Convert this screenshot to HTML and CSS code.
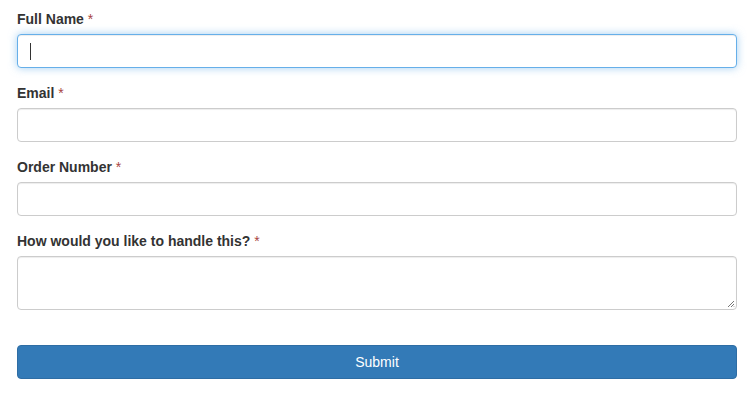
FILE: index.html
```html
<!DOCTYPE html>
<html>
<head>
<meta charset="utf-8">
<link rel="stylesheet" href="styles.css">
</head>
<body>
<form class="form">
  <div class="form-group">
    <label class="label">Full Name <span class="req">*</span></label>
    <div class="input focus"><span class="caret"></span></div>
  </div>
  <div class="form-group">
    <label class="label">Email <span class="req">*</span></label>
    <div class="input"></div>
  </div>
  <div class="form-group">
    <label class="label">Order Number <span class="req">*</span></label>
    <div class="input"></div>
  </div>
  <div class="form-group">
    <label class="label">How would you like to handle this? <span class="req">*</span></label>
    <div class="input textarea">
      <svg class="grip" width="8" height="8" viewBox="0 0 8 8"><path d="M7 1L1 7M7 4L4 7M7 6.5L6.5 7" stroke="#777" stroke-width="1" fill="none"/></svg>
    </div>
  </div>
  <div class="actions">
    <button type="button" class="btn">Submit</button>
  </div>
</form>
</body>
</html>
```

FILE: styles.css
```css
* { box-sizing: border-box; }
html, body { margin: 0; background: #fff; }
body {
  font-family: "Liberation Sans", Arial, sans-serif;
  font-size: 14px;
  line-height: 20px;
  color: #333;
}
.form {
  padding: 9px 14px 0 17px;
  display: flex;
  flex-direction: column;
}
.form-group {
  display: flex;
  flex-direction: column;
  margin-bottom: 15px;
}
.label {
  font-weight: bold;
  margin-bottom: 5px;
  display: block;
}
.req {
  color: #a94442;
  font-weight: normal;
}
.input {
  height: 34px;
  border: 1px solid #ccc;
  border-radius: 4px;
  background: #fff;
  box-shadow: inset 0 1px 1px rgba(0,0,0,0.075);
  padding: 6px 12px;
  display: flex;
  align-items: center;
  position: relative;
}
.input.focus {
  border-color: #66afe9;
  box-shadow: inset 0 1px 1px rgba(0,0,0,0.075), 0 0 8px rgba(102,175,233,0.6);
}
.caret {
  width: 1px;
  height: 17px;
  background: #333;
}
.textarea {
  height: 54px;
}
.grip {
  position: absolute;
  right: 1px;
  bottom: 1px;
}
.actions {
  padding-top: 20px;
}
.btn {
  display: block;
  width: 100%;
  height: 34px;
  border: 1px solid #2e6da4;
  border-radius: 4px;
  background: #337ab7;
  color: #fff;
  font-family: "Liberation Sans", Arial, sans-serif;
  font-size: 14px;
  line-height: 20px;
  padding: 6px 12px;
}
```
